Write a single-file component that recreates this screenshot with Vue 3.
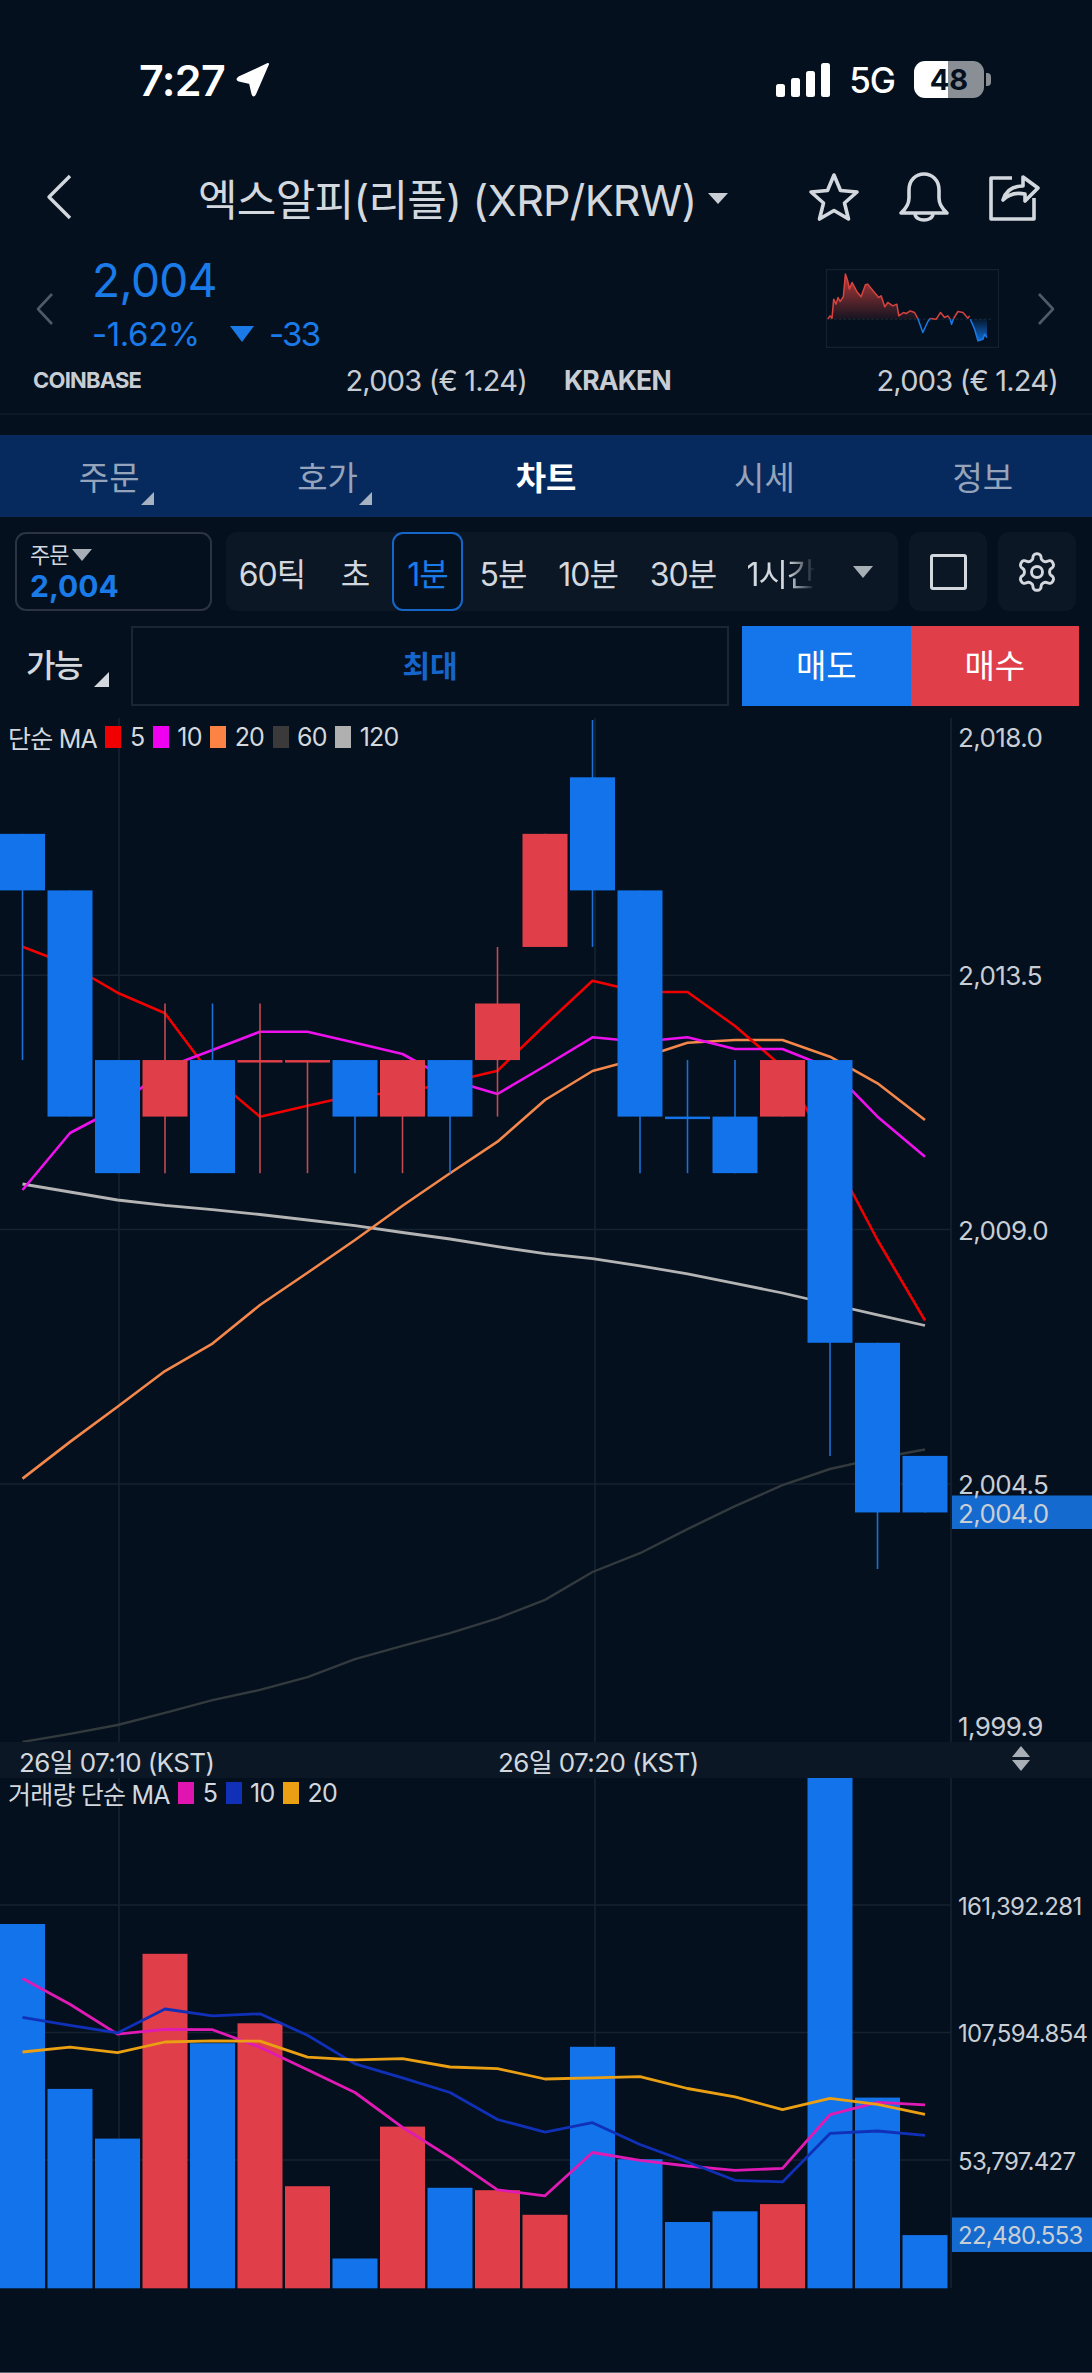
<template>
  <div class="page">
    <div class="status">
      <span class="clock">7:27</span>
      <svg class="locate" width="36" height="36" viewBox="0 0 36 36"><path d="M33 2 L20 32 Q18.5 35 17.5 32 L15 21 L4 18.5 Q1 17.500 4 15.500 Z" fill="#fff" stroke="#fff" stroke-width="2" stroke-linejoin="round" /></svg>
      <div class="status-right">
        <svg width="54" height="34" viewBox="0 0 54 34" fill="#fff">
          <rect x="0" y="21" width="9" height="13" rx="2.5" />
          <rect x="15" y="15" width="9" height="19" rx="2.5" />
          <rect x="30" y="8" width="9" height="26" rx="2.5" />
          <rect x="45" y="0" width="9" height="34" rx="2.5" />
        </svg>
        <span class="net">5G</span>
        <div class="battery"><span>48</span></div>
        <i class="nub"></i>
      </div>
    </div>

    <div class="nav">
      <svg class="back" width="26" height="46" viewBox="0 0 26 46"><path d="M24 2 L3 23 L24 44" /></svg>
      <div class="title">엑스알피(리플) (XRP/KRW)<i class="caret"></i></div>
      <div class="nav-icons">
        <svg width="52" height="50" viewBox="0 0 52 50"><path d="M26 3 L32.5 18.5 L49 20 L36.5 31 L40.5 47 L26 38.5 L11.5 47 L15.5 31 L3 20 L19.5 18.5 Z" /></svg>
        <svg width="52" height="50" viewBox="0 0 52 50"><path d="M3 41 Q11 34 11 26 V18 C11 8 18 2 26 2 C34 2 41 8 41 18 V26 Q41 34 49 41 Z" /><path d="M17 42 C18 50 34 50 35 42" /></svg>
        <svg width="52" height="50" viewBox="0 0 52 50"><path d="M24 6 H3 V47 H46 V26" /><path d="M15 28 C18 18 26 14 35 14 V5 L50 16 L37 29 V22 C27 20 20 23 15 28 Z" /></svg>
      </div>
    </div>

    <div class="quote">
      <svg class="chev" width="20" height="34" viewBox="0 0 20 34"><path d="M17 2 L3 17 L17 32" /></svg>
      <div class="quote-main">
        <div class="price">2,004</div>
        <div class="change">
          <span>-1.62%</span>
          <i class="down"></i>
          <span>-33</span>
        </div>
      </div>
      <svg class="spark" width="173" height="79" viewBox="140 686 518 234">
        <defs>
          <linearGradient id="sparkRed" x1="0" y1="0" x2="0" y2="1">
            <stop offset="0" stop-color="#d8433f" stop-opacity="0.85" />
            <stop offset="1" stop-color="#d8433f" stop-opacity="0.08" />
          </linearGradient>
          <linearGradient id="sparkBlue" x1="0" y1="0" x2="0" y2="1">
            <stop offset="0" stop-color="#1476ea" stop-opacity="0.08" />
            <stop offset="1" stop-color="#1476ea" stop-opacity="0.9" />
          </linearGradient>
        </defs>
        <rect x="141" y="687" width="516" height="232" fill="none" stroke="#1a2634" stroke-width="3" />
        <line x1="150" y1="835" x2="640" y2="835" stroke="#2a3644" stroke-width="2" stroke-dasharray="8 6" />
        <polygon :points="sparkRedA + ' 415,835 145,835'" fill="url(#sparkRed)" />
        <polygon :points="sparkBlueC + ' 622,835 572,835'" fill="url(#sparkBlue)" />
        <polyline :points="sparkRedA" class="spark-r" />
        <polyline :points="sparkRedB" class="spark-r" />
        <polyline :points="sparkRedC" class="spark-r" />
        <polyline :points="sparkBlueA" class="spark-b" />
        <polyline :points="sparkBlueB" class="spark-b" />
        <polyline :points="sparkBlueC" class="spark-b" />
      </svg>
      <svg class="chev chev-r" width="20" height="34" viewBox="0 0 20 34"><path d="M3 2 L17 17 L3 32" /></svg>
    </div>

    <div class="exchanges">
      <div class="exch"><b class="small">COINBASE</b><span>2,003 (€ 1.24)</span></div>
      <div class="exch"><b>KRAKEN</b><span>2,003 (€ 1.24)</span></div>
    </div>

    <div class="tabs">
      <div v-for="t in tabs" :key="t.label" class="tab" :class="{ on: t.on }">
        {{ t.label }}
        <i v-if="t.corner" class="corner"></i>
      </div>
    </div>

    <div class="toolbar">
      <div class="order-box">
        <div class="order-top">주문<i class="tri"></i></div>
        <div class="order-price">2,004</div>
      </div>
      <div class="intervals">
        <div v-for="it in intervals" :key="it.label" class="interval" :class="{ on: it.on, fade: it.fade }" :style="{ width: it.w + 'px' }">
          <span>{{ it.label }}</span>
        </div>
        <div class="more"><i class="tri big"></i></div>
      </div>
      <div class="tool-btn"><i class="square"></i></div>
      <div class="tool-btn gear-btn">
        <svg width="44" height="44" viewBox="0 0 24 24" fill="none" stroke="#d3d8de" stroke-width="1.6">
          <path d="M12.22 2h-.44a2 2 0 0 0-2 2v.18a2 2 0 0 1-1 1.73l-.43.25a2 2 0 0 1-2 0l-.15-.08a2 2 0 0 0-2.73.73l-.22.38a2 2 0 0 0 .73 2.73l.15.1a2 2 0 0 1 1 1.72v.51a2 2 0 0 1-1 1.74l-.15.09a2 2 0 0 0-.73 2.73l.22.38a2 2 0 0 0 2.73.73l.15-.08a2 2 0 0 1 2 0l.43.25a2 2 0 0 1 1 1.73V20a2 2 0 0 0 2 2h.44a2 2 0 0 0 2-2v-.18a2 2 0 0 1 1-1.73l.43-.25a2 2 0 0 1 2 0l.15.08a2 2 0 0 0 2.73-.73l.22-.39a2 2 0 0 0-.73-2.73l-.15-.08a2 2 0 0 1-1-1.74v-.5a2 2 0 0 1 1-1.74l.15-.09a2 2 0 0 0 .73-2.73l-.22-.38a2 2 0 0 0-2.73-.73l-.15.08a2 2 0 0 1-2 0l-.43-.25a2 2 0 0 1-1-1.73V4a2 2 0 0 0-2-2z" />
          <circle cx="12" cy="12" r="3" />
        </svg>
      </div>
    </div>

    <div class="orderbar">
      <div class="avail">가능<i class="corner light"></i></div>
      <div class="max">최대</div>
      <div class="sell">매도</div>
      <div class="buy">매수</div>
    </div>

    <div class="chart main">
      <svg width="1092" height="1024" viewBox="0 718 1092 1024">
        <g class="grid">
          <line v-for="y in [975.3, 1229.5, 1484]" :key="y" x1="0" x2="951" :y1="y" :y2="y" />
          <line v-for="x in [119, 595, 951]" :key="x" :x1="x" :x2="x" y1="718" y2="1742" />
        </g>
        <polyline :points="line(ma120)" class="ma" stroke="#b4b4b4" stroke-width="2.8" />
        <polyline :points="line(ma60)" class="ma" stroke="#333a3d" stroke-width="2.4" />
        <polyline :points="line(ma20)" class="ma" stroke="#f5874b" stroke-width="2.6" />
        <polyline :points="line(ma5)" class="ma" stroke="#f00000" stroke-width="2.6" />
        <polyline :points="line(ma10)" class="ma" stroke="#ee11ee" stroke-width="2.6" />
        <g v-for="(c, i) in candles" :key="i">
          <line :x1="cx(i)" :x2="cx(i)" :y1="c.wt" :y2="c.wb" :stroke="c.red ? '#c44a52' : '#1a70d6'" stroke-width="1.6" />
          <rect :x="cx(i) - 22.5" :width="45" :y="c.t" :height="Math.max(c.b - c.t, 2.5)" :fill="c.red ? '#e03e48' : '#1373ea'" />
        </g>
        <rect x="952" y="1495.5" width="140" height="33.5" fill="#146ace" />
        <text v-for="l in priceLabels" :key="l.t" x="958" :y="l.y" class="axis">{{ l.t }}</text>
      </svg>
      <div class="legend">
        <span class="legend-name">단순 MA</span>
        <template v-for="k in mainLegend" :key="k.t">
          <i :style="{ background: k.c }"></i><span>{{ k.t }}</span>
        </template>
      </div>
    </div>

    <div class="timeaxis">
      <span class="t1">26일 07:10 (KST)</span>
      <span class="t2">26일 07:20 (KST)</span>
      <div class="updown"><i class="up"></i><i class="tri"></i></div>
    </div>

    <div class="chart vol">
      <svg width="1092" height="594" viewBox="0 1778 1092 594">
        <g class="grid">
          <line v-for="y in [1905, 2032.5, 2160]" :key="y" x1="0" x2="951" :y1="y" :y2="y" />
          <line v-for="x in [119, 595, 951]" :key="x" :x1="x" :x2="x" y1="1778" y2="2288" />
        </g>
        <rect v-for="(b, i) in volumes" :key="i" :x="cx(i) - 22.5" :width="45" :y="b.t" :height="2288.3 - b.t" :fill="b.red ? '#e03e48' : '#1373ea'" />
        <polyline :points="line(vma5)" class="ma" stroke="#e01ab4" stroke-width="2.8" />
        <polyline :points="line(vma10)" class="ma" stroke="#1030b8" stroke-width="2.8" />
        <polyline :points="line(vma20)" class="ma" stroke="#eb9f12" stroke-width="2.8" />
        <rect x="952" y="2217.5" width="140" height="34.5" fill="#146ace" />
        <text v-for="l in volLabels" :key="l.t" x="958" :y="l.y" class="axis small">{{ l.t }}</text>
      </svg>
      <div class="legend">
        <span class="legend-name vn">거래량 단순 MA</span>
        <template v-for="k in volLegend" :key="k.t">
          <i :style="{ background: k.c }"></i><span>{{ k.t }}</span>
        </template>
      </div>
    </div>
  </div>
</template>

<script setup>
const tabs = [
  { label: '주문', corner: true },
  { label: '호가', corner: true },
  { label: '차트', on: true },
  { label: '시세' },
  { label: '정보' },
]

const intervals = [
  { label: '60틱', w: 92 },
  { label: '초', w: 74 },
  { label: '1분', w: 71, on: true },
  { label: '5분', w: 80 },
  { label: '10분', w: 90 },
  { label: '30분', w: 100 },
  { label: '1시간', w: 96, fade: true },
]

const cx = (i) => 22.5 + 47.5 * i
const line = (ys) => ys.map((y, i) => `${cx(i)},${y}`).join(' ')

// price levels the candles sit on
const L = (n) => 777.3 + 56.55 * n
const top = 720
const mk = (red, t, b, wt, wb) => ({ red, t, b, wt: wt ?? t, wb: wb ?? b })
const candles = [
  mk(false, L(1), L(2), L(1), L(5)),
  mk(false, L(2), L(6)),
  mk(false, L(5), L(7)),
  mk(true, L(5), L(6), L(4), L(7)),
  mk(false, L(5), L(7), L(4), L(7)),
  mk(true, L(5), L(5), L(4), L(7)),
  mk(true, L(5), L(5), L(5), L(7)),
  mk(false, L(5), L(6), L(5), L(7)),
  mk(true, L(5), L(6), L(5), L(7)),
  mk(false, L(5), L(6), L(5), L(7)),
  mk(true, L(4), L(5), L(3), L(6)),
  mk(true, L(1), L(3)),
  mk(false, L(0), L(2), top, L(3)),
  mk(false, L(2), L(6), L(2), L(7)),
  mk(false, L(6), L(6), L(5), L(7)),
  mk(false, L(6), L(7), L(5), L(7)),
  mk(true, L(5), L(6)),
  mk(false, L(5), L(10), L(5), L(12)),
  mk(false, L(10), L(13), L(10), L(14)),
  mk(false, L(12), L(13)),
]

const ma5 = [946.7, 965, 992.7, 1013.3, 1076.7, 1116.7, 1105.7, 1095, 1093, 1082, 1070.7, 1025, 980.7, 992, 992, 1026, 1067, 1150, 1240, 1320.5]
const ma10 = [1190, 1133, 1108, 1068, 1050, 1031.7, 1031.7, 1042.7, 1054, 1080, 1094, 1066, 1037.3, 1041.7, 1037.3, 1049, 1049, 1068, 1116.7, 1156.7]
const ma20 = [1478.6, 1441.9, 1406.7, 1371, 1343.5, 1305, 1272.7, 1240, 1205.7, 1173.3, 1141.7, 1100, 1071, 1058.3, 1042.7, 1040, 1040, 1056.7, 1083.3, 1120]
const ma60 = [1741.9, 1733.9, 1725, 1712.8, 1700.2, 1689.9, 1677.2, 1659.2, 1645.8, 1633.2, 1618.3, 1599.9, 1572, 1553.2, 1529.1, 1506.2, 1485.1, 1469, 1458.3, 1449.5]
const ma120 = [1184, 1192, 1200, 1205.4, 1209.6, 1214.5, 1220, 1225.6, 1232.5, 1239, 1246.7, 1253.6, 1258.6, 1265.8, 1273.9, 1283.4, 1293, 1304, 1314.8, 1325.5]

const volTops = [1924, 2088.9, 2138.6, 1953.8, 2043.2, 2023.3, 2186.2, 2258.5, 2126.6, 2187.8, 2190.2, 2214.8, 2046.8, 2159.2, 2222, 2211.3, 2204.1, 1777.8, 2097.6, 2235.1]
const volRed = [3, 5, 6, 8, 10, 11, 16]
const volumes = volTops.map((t, i) => ({ t, red: volRed.includes(i) }))

const vma5 = [1978.5, 2004.3, 2034.1, 2029.3, 2029.7, 2047.2, 2069.8, 2092.5, 2127.4, 2157.2, 2189.8, 2195.8, 2152.5, 2160.4, 2166, 2170.4, 2168.4, 2114.7, 2102.4, 2104.8]
const vma10 = [2017.4, 2025.3, 2032.9, 2009, 2015.8, 2013.8, 2035.3, 2063.9, 2077.8, 2092.5, 2119.5, 2132.2, 2122.7, 2144.5, 2162, 2180.3, 2181.9, 2133.4, 2131, 2135.4]
const vma20 = [2052, 2047.2, 2052.7, 2042, 2040.8, 2041.2, 2057.1, 2059.9, 2058.7, 2067, 2068.6, 2079, 2077.8, 2076.6, 2088.5, 2096.8, 2109.6, 2098.4, 2104.4, 2114.3]

const priceLabels = [
  { t: '2,018.0', y: 747 },
  { t: '2,013.5', y: 985 },
  { t: '2,009.0', y: 1239.5 },
  { t: '2,004.5', y: 1494 },
  { t: '2,004.0', y: 1523 },
  { t: '1,999.9', y: 1735.5 },
]
const volLabels = [
  { t: '161,392.281', y: 1914.5 },
  { t: '107,594.854', y: 2042 },
  { t: '53,797.427', y: 2169.5 },
  { t: '22,480.553', y: 2244 },
]
const mainLegend = [
  { t: '5', c: '#f00000' },
  { t: '10', c: '#f000f0' },
  { t: '20', c: '#fb8344' },
  { t: '60', c: '#3a3a3a' },
  { t: '120', c: '#b0b0b0' },
]
const volLegend = [
  { t: '5', c: '#e015b0' },
  { t: '10', c: '#1030b8' },
  { t: '20', c: '#eb9f12' },
]

const sparkRedA = '145,835 152,825 158,832 163,775 170,790 176,770 182,782 192,768 198,700 205,720 210,745 218,725 232,752 245,768 258,732 265,730 285,755 298,770 305,765 316,798 325,785 340,795 352,790 358,825 372,815 380,818 392,810 405,815 415,833'
const sparkRedB = '452,833 470,835 483,815 495,830 505,825 512,835'
const sparkRedC = '522,833 535,812 550,815 565,832 570,825'
const sparkBlueA = '415,833 430,875 445,842 452,833'
const sparkBlueB = '512,835 516,850 522,833'
const sparkBlueC = '572,835 585,865 595,900 610,895 615,880 622,890'
</script>

<style scoped>
.page {
  box-sizing: border-box;
  width: 1092px;
  height: 2373px;
  overflow: hidden;
  border-bottom: 1px solid #55646f;
  background: #04101e;
  color: #d3d8de;
  font-family: Inter, "Noto Sans CJK KR", sans-serif;
}
i {
  display: block;
}

.status {
  display: flex;
  align-items: center;
  height: 37px;
  padding: 61px 101px 0 139px;
  color: #fff;
}
.clock {
  font-size: 43px;
  font-weight: 600;
  letter-spacing: -0.6px;
}
.locate {
  margin-left: 10px;
}
.status-right {
  display: flex;
  align-items: center;
  margin-left: auto;
}
.net {
  font-size: 35px;
  font-weight: 500;
  margin-left: 19px;
  letter-spacing: -1px;
}
.battery {
  width: 70px;
  height: 37px;
  margin-left: 19px;
  border-radius: 11px;
  background: linear-gradient(to right, #fff 34px, #8a8f96 34px);
  color: #04101e;
  font-size: 29px;
  font-weight: 700;
  line-height: 37px;
  text-align: center;
}
.nub {
  width: 5px;
  height: 13px;
  margin-left: 2px;
  border-radius: 0 4px 4px 0;
  background: #8a8f96;
}

.nav {
  display: flex;
  align-items: center;
  height: 60px;
  margin-top: 69px;
  padding-left: 46px;
}
.back path,
.chev path,
.nav-icons path {
  fill: none;
  stroke-linejoin: round;
}
.back path {
  stroke: #d3d8de;
  stroke-width: 3.4;
}
.title {
  display: flex;
  align-items: center;
  margin-left: 126px;
  width: 528px;
  font-size: 43px;
  color: #d3d8de;
  white-space: nowrap;
  letter-spacing: -0.7px;
}
.caret {
  width: 0;
  height: 0;
  margin-left: 11px;
  margin-top: 2px;
  border-left: 10px solid transparent;
  border-right: 10px solid transparent;
  border-top: 11px solid #c9ced5;
}
.nav-icons {
  display: flex;
  gap: 38px;
  margin-left: 82px;
}
.nav-icons svg {
  flex: none;
}
.nav-icons path {
  stroke: #d3d8de;
  stroke-width: 3.6;
}

.quote {
  display: flex;
  align-items: flex-start;
  height: 102px;
  margin-top: 26px;
  padding-left: 35px;
}
.chev {
  margin-top: 39px;
}
.chev path {
  stroke: #4e5a67;
  stroke-width: 2.6;
}
.quote-main {
  width: 734px;
  margin-left: 37px;
  color: #1a7be8;
}
.price {
  font-size: 46px;
  line-height: 54px;
  letter-spacing: -0.6px;
}
.change {
  display: flex;
  align-items: center;
  margin-top: 8px;
  font-size: 33px;
  line-height: 38px;
  letter-spacing: -0.4px;
}
.down {
  width: 0;
  height: 0;
  margin: 0 15px 0 30px;
  border-left: 12px solid transparent;
  border-right: 12px solid transparent;
  border-top: 16px solid #1a7be8;
}
.change span:last-child {
  letter-spacing: -1.6px;
}
.spark {
  margin-top: 16px;
}
.spark-r,
.spark-b {
  fill: none;
  stroke-width: 4.5;
  stroke-linejoin: round;
}
.spark-r {
  stroke: #d8433f;
}
.spark-b {
  stroke: #1a7be8;
}
.chev-r {
  margin-left: 37px;
}

.exchanges {
  display: flex;
  gap: 37px;
  height: 58px;
  padding: 0 34px 0 33px;
  border-bottom: 2px solid #0c1826;
}
.exch {
  display: flex;
  flex: 1;
  height: 50px;
  align-items: center;
  justify-content: space-between;
  font-size: 29px;
  color: #c8cdd4;
  letter-spacing: -0.8px;
}
.exch b {
  font-size: 26.5px;
  font-weight: 700;
}
.exch b.small {
  font-size: 22px;
}

.tabs {
  display: grid;
  grid-template-columns: repeat(5, 1fr);
  height: 82px;
  margin-top: 20px;
  background: #062a5e;
}
.tab {
  position: relative;
  display: flex;
  align-items: center;
  justify-content: center;
  font-size: 33px;
  color: #95a4ba;
}
.tab.on {
  color: #fff;
  font-weight: 700;
}
.corner {
  position: absolute;
  left: 141px;
  top: 57px;
  width: 0;
  height: 0;
  border-left: 13px solid transparent;
  border-bottom: 13px solid #a6b1c2;
}

.toolbar {
  display: flex;
  height: 79px;
  margin-top: 15px;
  padding-left: 15px;
}
.order-box {
  box-sizing: border-box;
  width: 197px;
  padding: 6px 0 0 13px;
  border: 2px solid #2b3440;
  border-radius: 11px;
}
.order-top {
  display: flex;
  align-items: center;
  font-size: 22px;
  line-height: 30px;
  letter-spacing: -1px;
}
.tri {
  width: 0;
  height: 0;
  margin-left: 4px;
  border-left: 10px solid transparent;
  border-right: 10px solid transparent;
  border-top: 12px solid #a9afb7;
}
.order-price {
  color: #1a7be8;
  font-size: 30px;
  font-weight: 700;
  line-height: 32px;
}
.intervals {
  display: flex;
  width: 672px;
  margin-left: 14px;
  border-radius: 11px;
  background: #0c1725;
}
.interval {
  box-sizing: border-box;
  display: flex;
  align-items: center;
  justify-content: center;
  font-size: 32px;
  letter-spacing: -1px;
}
.interval.on {
  border: 2.5px solid #1466c8;
  border-radius: 11px;
  background: #04101e;
  color: #1a7be8;
}
.interval.fade span {
  -webkit-mask-image: linear-gradient(to right, #000 60%, transparent 100%);
  mask-image: linear-gradient(to right, #000 60%, transparent 100%);
}
.more {
  display: flex;
  flex: 1;
  align-items: center;
  justify-content: center;
}
.tri.big {
  margin: 0 0 0 -1px;
}
.tool-btn {
  display: flex;
  align-items: center;
  justify-content: center;
  width: 78px;
  margin-left: 11px;
  border-radius: 11px;
  background: #0c1725;
}
.square {
  box-sizing: border-box;
  width: 37px;
  height: 36px;
  border: 3px solid #d3d8de;
  border-radius: 3px;
}

.orderbar {
  display: flex;
  height: 80px;
  margin-top: 15px;
}
.avail {
  position: relative;
  width: 105px;
  padding-left: 26px;
  font-size: 32px;
  font-weight: 500;
  line-height: 80px;
  letter-spacing: -1.5px;
}
.corner.light {
  left: 94px;
  top: 46px;
  border-left-width: 15px;
  border-bottom-width: 15px;
  border-bottom-color: #d3d8de;
}
.max {
  box-sizing: border-box;
  width: 598px;
  border: 2px solid #1c2633;
  color: #1566cc;
  font-size: 30px;
  font-weight: 700;
  line-height: 76px;
  text-align: center;
}
.sell,
.buy {
  width: 168.5px;
  color: #fff;
  font-size: 33px;
  line-height: 80px;
  text-align: center;
}
.sell {
  margin-left: 13px;
  background: #1476ea;
}
.buy {
  background: #e03e48;
}

.chart {
  position: relative;
}
.chart svg {
  display: block;
}
.main {
  margin-top: 12px;
}
.grid line {
  stroke: #162230;
  stroke-width: 1.6;
}
.ma {
  fill: none;
  stroke-linejoin: round;
}
.axis {
  fill: #c9ced5;
  font-size: 26px;
  letter-spacing: -0.6px;
}
.axis.small {
  font-size: 24px;
  letter-spacing: -0.7px;
}
.legend {
  position: absolute;
  left: 8px;
  top: 8px;
  display: flex;
  align-items: center;
  height: 22px;
  font-size: 25px;
  letter-spacing: -0.8px;
}
.legend i {
  width: 16px;
  height: 22px;
  margin: 0 8.500px 0 8.500px;
}
.vol .legend {
  top: 4px;
}

.timeaxis {
  position: relative;
  display: flex;
  height: 36px;
  align-items: center;
  background: #0c1725;
  font-size: 26px;
  letter-spacing: -0.6px;
}
.t1 {
  width: 479px;
  margin-left: 19px;
}
.updown {
  position: absolute;
  left: 1012px;
  top: 4px;
  display: flex;
  flex-direction: column;
  gap: 3px;
}
.updown .tri,
.up {
  margin: 0;
  width: 0;
  height: 0;
  border-left: 9px solid transparent;
  border-right: 9px solid transparent;
}
.updown .tri {
  border-top: 11px solid #a9afb7;
}
.up {
  border-bottom: 11px solid #a9afb7;
}
</style>

<style>
html, body {
  margin: 0;
  background: #04101e;
}
</style>
